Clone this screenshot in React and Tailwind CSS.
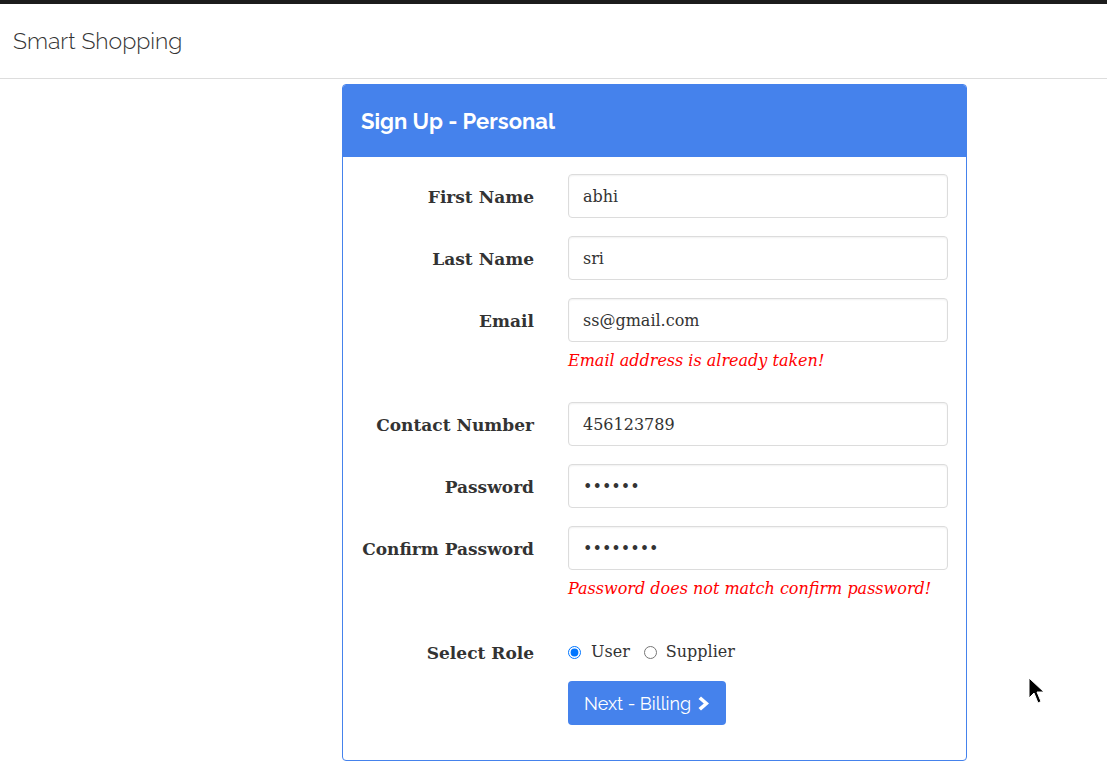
import React from "react";

const serif = { fontFamily: "'DejaVu Serif', Georgia, serif" };

function Row({ label, children, error }) {
  return (
    <div className="mb-[18px]">
      <div className="flex items-center">
        <label className="w-[191px] shrink-0 pt-[3px] text-right text-[17px] font-bold text-[#333]" >{label}</label>
        <div className="ml-[34px] w-[380px]">{children}</div>
      </div>
      {error && (
        <div className="ml-[225px] pt-[6px] pb-[10px] text-[16px] leading-[26px] italic text-[#ff0000]">{error}</div>
      )}
    </div>
  );
}

function Input({ value, type = "text" }) {
  return (
    <input
      readOnly
      type={type}
      value={value}
      className="h-[44px] w-full rounded-[4px] border border-[#dcdcdc] bg-white px-[14px] pt-[1px] text-[16px] text-[#333] shadow-[inset_0_1px_2px_rgba(0,0,0,0.06)] outline-none"
      style={serif}
    />
  );
}

export default function App() {
  return (
    <div className="relative min-h-[764px] bg-white" style={serif}>
      <div className="h-[4px] bg-[#1c1c1c]" />
      <div className="flex h-[75px] items-center border-b border-[#dddddd] px-[13px]">
        <span className="text-[23px] font-light text-[#333]" style={{ fontFamily: "Raleway, Lato, 'Open Sans', sans-serif" }}>
          Smart Shopping
        </span>
      </div>
      <div className="ml-[342px] mt-[5px] w-[625px] overflow-hidden rounded-[4px] border border-[#4582ec]">
        <div className="flex h-[72px] items-center bg-[#4582ec] px-[18px]">
          <h3 className="text-[22px] font-bold text-white" style={{ fontFamily: "Raleway, Lato, 'Open Sans', sans-serif" }}>
            Sign Up - Personal
          </h3>
        </div>
        <div className="pt-[17px] pb-[35px]" style={serif}>
          <Row label="First Name"><Input value="abhi" /></Row>
          <Row label="Last Name"><Input value="sri" /></Row>
          <Row label="Email" error="Email address is already taken!"><Input value="ss@gmail.com" /></Row>
          <Row label="Contact Number"><Input value="456123789" /></Row>
          <Row label="Password"><Input type="password" value="abcdef" /></Row>
          <Row label="Confirm Password" error="Password does not match confirm password!"><Input type="password" value="abcdefgh" /></Row>
          <div className="flex h-[44px] items-center">
            <label className="w-[191px] shrink-0 pt-[3px] text-right text-[17px] font-bold text-[#333]">Select Role</label>
            <div className="ml-[34px] flex items-center text-[16px] text-[#333]">
              <input type="radio" name="role" defaultChecked className="m-0 h-[13px] w-[13px] accent-[#0075ff]" />
              <span className="ml-[10px]">User</span>
              <input type="radio" name="role" className="m-0 ml-[14px] h-[13px] w-[13px]" />
              <span className="ml-[9px]">Supplier</span>
            </div>
          </div>
          <div className="ml-[225px] mt-[7px]">
            <button className="flex h-[44px] items-center gap-[7px] rounded-[4px] bg-[#4582ec] px-[16px] text-[18px] text-white" style={{ fontFamily: "Raleway, Lato, 'Open Sans', sans-serif" }}>
              Next - Billing
              <svg width="12" height="15" viewBox="0 0 12 15" fill="white">
                <path d="M3 0.5 L11 7.5 L3 14.5 L0.5 12 L5.8 7.5 L0.5 3 Z" />
              </svg>
            </button>
          </div>
        </div>
      </div>
      <svg className="absolute left-[1028px] top-[677px]" width="18" height="28" viewBox="0 0 18 28">
        <path d="M1 1 L1 21 L6 16 L10 26 L13 24.5 L9 15 L16 15 Z" fill="black" stroke="white" strokeWidth="1" />
      </svg>
    </div>
  );
}
